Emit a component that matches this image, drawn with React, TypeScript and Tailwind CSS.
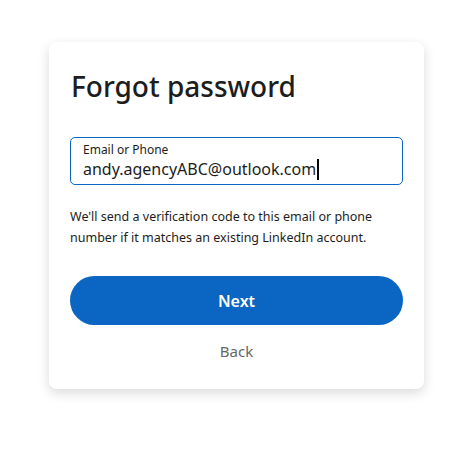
import { FC } from "react";

const App: FC = () => {
  return (
    <div className="min-h-[450px] w-[464px] bg-white pt-[42px] pl-[49px] font-['Noto_Sans',sans-serif]">
      <div className="w-[375px] rounded-lg bg-white px-[21px] pt-[24px] pb-[26px] shadow-[0_4px_12px_rgba(0,0,0,0.15)]">
        {/* Heading */}
        <h1 className="pl-[1px] text-[28px] font-medium leading-[40px] text-[#1d1d1d]">
          Forgot password
        </h1>

        {/* Email field */}
        <div className="mt-[31px] h-[48px] rounded-[5px] border-[1.5px] border-[#0a66c2] px-[12px] pt-[4px]">
          <div className="text-[12px] leading-[16px] text-[#1d1d1d]">
            Email or Phone
          </div>
          <div className="flex items-center text-[16px] leading-[22px] text-[#1d1d1d]">
            andy.agencyABC@outlook.com
            <span className="ml-[1px] inline-block h-[21px] w-[2px] bg-black" />
          </div>
        </div>

        <p className="mt-[21px] text-[12.5px] leading-[21px] text-[#1d1d1d]">
          We'll send a verification code to this email or phone number if it
          matches an existing LinkedIn account.
        </p>

        {/* Next */}
        <button
          type="button"
          className="mt-[28px] flex h-[49px] w-full items-center justify-center rounded-full bg-[#0a66c2] text-[16px] font-semibold text-white"
        >
          Next
        </button>

        {/* Back */}
        <div className="mt-[14px] text-center text-[15px] leading-[24px] text-[#666666]">
          Back
        </div>
      </div>
    </div>
  );
};

export default App;
